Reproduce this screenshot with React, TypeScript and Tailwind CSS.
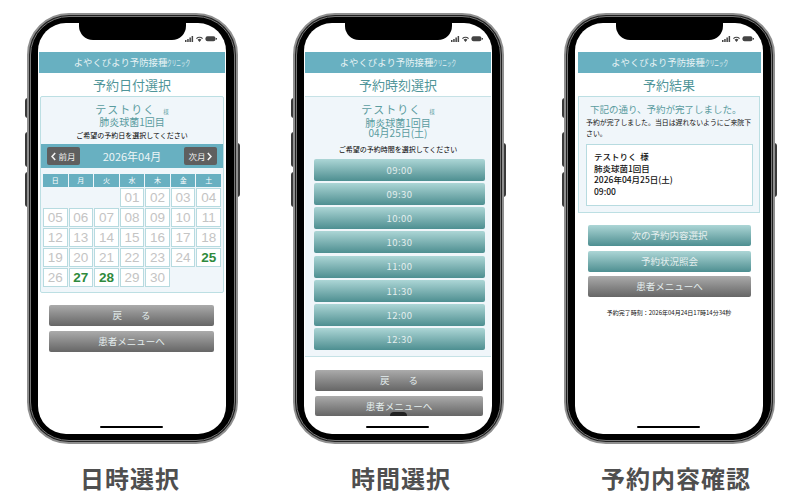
const font = { fontFamily: '"Noto Sans CJK JP", "Noto Sans", sans-serif' };

function StatusIcons() {
  return (
    <svg className="absolute right-[9px] top-[12px]" width="32" height="8" viewBox="0 0 32 8" fill="#444">
      <rect x="0" y="5" width="1.5" height="2" />
      <rect x="2.2" y="4" width="1.5" height="3" />
      <rect x="4.4" y="2.5" width="1.5" height="4.5" />
      <rect x="6.6" y="1" width="1.5" height="6" />
      <path d="M11 3.2a5 5 0 0 1 7 0l-.8.8a4 4 0 0 0-5.4 0zM12.6 4.8a2.6 2.6 0 0 1 3.8 0L14.5 7z" />
      <rect x="20.5" y="1.2" width="10" height="5" rx="2" />
      <rect x="31" y="3" width="1" height="1.6" />
    </svg>
  );
}

function Phone({ children, extra }: { children: React.ReactNode; extra?: React.ReactNode }) {
  return (
    <div className="relative w-[211px] h-[431px] shrink-0">
      <div className="absolute left-[-2px] top-[85px] w-[3px] h-[20px] bg-[#3a3a3a] rounded-l-sm" />
      <div className="absolute left-[-2px] top-[119px] w-[3px] h-[35px] bg-[#3a3a3a] rounded-l-sm" />
      <div className="absolute left-[-2px] top-[159px] w-[3px] h-[35px] bg-[#3a3a3a] rounded-l-sm" />
      <div className="absolute right-[-2px] top-[130px] w-[3px] h-[54px] bg-[#3a3a3a] rounded-r-sm" />
      <div className="relative h-full rounded-[42px] border-2 border-[#8f8f8f] bg-[#222] p-px">
        <div className="h-full rounded-[39px] border border-[#777] bg-black pl-[7px] pr-[8px] py-[6px]">
          <div className="relative h-full rounded-[28px] bg-white overflow-hidden pt-[29px]">
            <div className="absolute left-[41px] top-0 w-[107px] h-[17px] bg-black rounded-b-[14px] z-10" />
            <StatusIcons />
            {children}
            <div className="absolute left-[62px] bottom-[6px] w-[63px] h-[2px] bg-black rounded-full z-10" />
            {extra}
          </div>
        </div>
      </div>
    </div>
  );
}

function Header({ cls }: { cls: string }) {
  return (
    <div className={`${cls} h-[21px] bg-[#68b0c1] text-[#e6f2f4] text-[9.4px] leading-[21px] flex justify-center whitespace-nowrap`}>
      <span>よやくびより予防接種</span>
      <span className="inline-block w-[23px] text-[7.5px] origin-left scale-x-[0.62]">クリニック</span>
    </div>
  );
}

function Title({ children }: { children: React.ReactNode }) {
  return <div className="h-[23px] text-[13px] leading-[23px] text-center text-[#4f9599]">{children}</div>;
}

function Btn({ children, teal, h = 'h-[21px]' }: { children: React.ReactNode; teal?: boolean; h?: string }) {
  return (
    <div
      className={`${h} rounded-[2px] flex items-center justify-center text-[9.5px] text-[#e4eeee] bg-gradient-to-b ${
        teal ? 'from-[#acd6d6] to-[#4d8f91]' : 'from-[#ababab] to-[#666666]'
      }`}
    >
      {children}
    </div>
  );
}

const weekdays = ['日', '月', '火', '水', '木', '金', '土'];
const green = ['25', '27', '28'];
const days = Array.from({ length: 30 }, (_, i) => String(i + 1).padStart(2, '0'));

function Calendar() {
  return (
    <div className="grid grid-cols-7 gap-px mx-[2px] mt-[6px]">
      {weekdays.map((d) => (
        <div key={d} className="h-[13px] bg-[#68b0c1] text-white text-[7px] leading-[13px] text-center">
          {d}
        </div>
      ))}
      {[0, 1, 2].map((i) => (
        <div key={i} />
      ))}
      {days.map((d) => (
        <div
          key={d}
          className={`h-[19px] border border-[#b7dbe0] bg-white text-center text-[13.5px] leading-[17px] ${
            green.includes(d) ? 'text-[#2f8a3c] font-bold' : 'text-[#c4c4c4]'
          }`}
          style={{ fontFamily: '"Liberation Sans", sans-serif' }}
        >
          {d}
        </div>
      ))}
    </div>
  );
}

function Chevron({ left }: { left?: boolean }) {
  return (
    <svg width="5" height="9" viewBox="0 0 5 9" fill="none" stroke="#f2f2f2" strokeWidth="1.6">
      <path d={left ? 'M4.2 1 L1 4.5 L4.2 8' : 'M0.8 1 L4 4.5 L0.8 8'} />
    </svg>
  );
}

function Name({ pt }: { pt: string }) {
  return (
    <div className={`${pt} text-[11px] leading-[14px] tracking-[1px] text-[#5a9ca0] whitespace-nowrap`}>
      テストりく<span className="ml-[8px] text-[5.5px] tracking-normal">様</span>
    </div>
  );
}

function Screen1() {
  return (
    <Phone>
      <Header cls="mx-[1px]" />
      <Title>予約日付選択</Title>
      <div className="mx-[2px] h-[197px] border border-[#bcdfe3] rounded-[2px] bg-[#f0f6fa] text-center">
        <Name pt="pt-[5px] h-[19px]" />
        <div className="h-[12px] text-[10px] leading-[12px] text-[#5a9ca0]">肺炎球菌1回目</div>
        <div className="h-[14px] text-[7px] leading-[14px] text-black">ご希望の予約日を選択してください</div>
        <div className="mt-[2px] h-[24px] bg-[#68b0c1] flex items-center justify-between px-[6px]">
          <div className="w-[33px] h-[18px] rounded-[2px] bg-[#5f5f5f] text-[#eee] text-[8.5px] flex items-center justify-center gap-[2px]">
            <Chevron left />
            前月
          </div>
          <div className="text-[11px] text-[#eef6f7]">2026年04月</div>
          <div className="w-[33px] h-[18px] rounded-[2px] bg-[#5f5f5f] text-[#eee] text-[8.5px] flex items-center justify-center gap-[2px]">
            次月
            <Chevron />
          </div>
        </div>
        <Calendar />
      </div>
      <div className="ml-[11px] mr-[12px] mt-[12px] flex flex-col gap-[5px]">
        <Btn>戻　　る</Btn>
        <Btn>患者メニューへ</Btn>
      </div>
    </Phone>
  );
}

const times = ['09:00', '09:30', '10:00', '10:30', '11:00', '11:30', '12:00', '12:30'];

function Screen2() {
  return (
    <Phone extra={<div className="absolute left-[86px] top-[389px] w-[17px] h-[4px] bg-[#222] rounded-t-sm z-10" />}>
      <Header cls="mx-[1px]" />
      <Title>予約時刻選択</Title>
      <div className="mx-[1px] h-[261px] border-y border-[#c6e2e6] bg-[#f0f6fa] text-center">
        <Name pt="pt-[5px] h-[21px]" />
        <div className="text-[10px] leading-[10px] text-[#5a9ca0]">
          肺炎球菌1回目
          <br />
          04月25日(土)
        </div>
        <div className="mt-[4px] h-[14px] text-[7px] leading-[14px] text-black">ご希望の予約時間を選択してください</div>
        <div className="ml-[9px] mr-[6px] mt-[3px] flex flex-col gap-[2.14px]">
          {times.map((t) => (
            <Btn key={t} teal h="h-[22px]">
              <span className="tracking-[0.5px]">{t}</span>
            </Btn>
          ))}
        </div>
      </div>
      <div className="ml-[11px] mr-[9px] mt-[13px] flex flex-col gap-[5px] h-[46px] overflow-hidden">
        <Btn>戻　　る</Btn>
        <Btn>患者メニューへ</Btn>
      </div>
    </Phone>
  );
}

function Screen3() {
  return (
    <Phone>
      <Header cls="ml-[3px] mr-[2px]" />
      <Title>予約結果</Title>
      <div className="ml-[3px] mr-[3px] h-[117px] border border-[#bcdfe3] bg-[#f0f6fa] pl-[7px] pr-[6px]">
        <div className="pt-[4px] pl-[4px] text-[9.5px] leading-[16px] whitespace-nowrap text-[#5a9ca0]">
          下記の通り、予約が完了しました。
        </div>
        <div className="text-[6.9px] leading-[10.5px] text-[#111]">
          予約が完了しました。当日は遅れないようにご来院下さい。
        </div>
        <div className="mt-[6px] h-[62px] border border-[#b7dbe0] bg-white pl-[7px] pt-[6px] text-[8.5px] leading-[11.7px] text-[#111] font-medium">
          <div>テストりく&nbsp;&nbsp;様</div>
          <div>肺炎球菌1回目</div>
          <div>2026年04月25日(土)</div>
          <div>09:00</div>
        </div>
      </div>
      <div className="ml-[13px] mr-[12px] mt-[12px] flex flex-col gap-[4.5px]">
        <Btn teal>次の予約内容選択</Btn>
        <Btn teal>予約状況照会</Btn>
        <Btn>患者メニューへ</Btn>
      </div>
      <div className="mt-[11px] text-center text-[6px] leading-[9px] text-[#111] whitespace-nowrap">
        予約完了時刻：2026年04月24日17時14分34秒
      </div>
    </Phone>
  );
}

function Label({ children, w }: { children: React.ReactNode; w: string }) {
  return (
    <div className={`${w} h-[30px] text-[24px] leading-[30px] tracking-[1px] font-bold text-[#4f4f4f] text-center whitespace-nowrap`}>
      {children}
    </div>
  );
}

export default function App() {
  return (
    <div className="w-[800px] h-[500px] bg-white overflow-hidden" style={font}>
      <div className="flex pl-[27px] pt-[13px]">
        <Screen1 />
        <div className="ml-[55px]">
          <Screen2 />
        </div>
        <div className="ml-[60px]">
          <Screen3 />
        </div>
      </div>
      <div className="flex pt-[19px] pl-[80px]">
        <Label w="w-[100px]">日時選択</Label>
        <div className="ml-[170px]">
          <Label w="w-[102px]">時間選択</Label>
        </div>
        <div className="ml-[148px]">
          <Label w="w-[152px]">予約内容確認</Label>
        </div>
      </div>
    </div>
  );
}
